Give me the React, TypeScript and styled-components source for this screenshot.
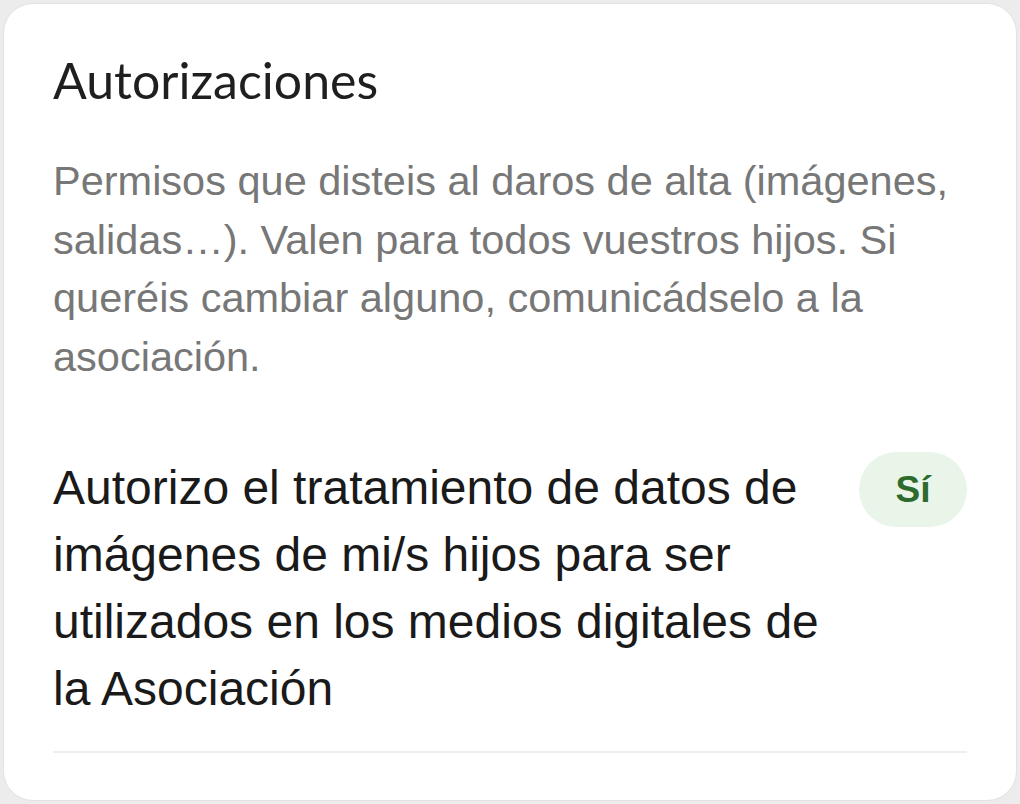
import styled, { createGlobalStyle } from "styled-components"

const GlobalStyle = createGlobalStyle`
  html, body {
    margin: 0;
    padding: 0;
    background: #ececec;
  }
  * {
    box-sizing: border-box;
  }
`

const Page = styled.div`
  padding: 3px;
  width: 1020px;
  height: 804px;
`

const Card = styled.section`
  height: 798px;
  background: #ffffff;
  border: 1px solid #e2e2e2;
  border-radius: 30px;
  padding: 44px 49px 0;
  display: flex;
  flex-direction: column;
`

const Title = styled.h2`
  margin: 0;
  font-family: Lato, "Liberation Sans", sans-serif;
  font-weight: 400;
  font-size: 50px;
  line-height: 65px;
  color: #1f1f1f;
`

const Description = styled.p`
  margin: 39px 0 0;
  font-family: "Liberation Sans", Arial, sans-serif;
  font-size: 41.5px;
  line-height: 58.5px;
  color: #777777;
`

const List = styled.div`
  margin-top: 68px;
  display: flex;
  flex-direction: column;
`

const Row = styled.div`
  display: flex;
  align-items: flex-start;
  gap: 32px;
  padding-bottom: 29px;
  border-bottom: 2px solid #efefef;
`

const Label = styled.div`
  flex: 1;
  font-family: "Liberation Sans", Arial, sans-serif;
  font-size: 48px;
  line-height: 67px;
  color: #1a1a1a;
`

const Badge = styled.span<{ $yes: boolean }>`
  flex: none;
  width: 108px;
  height: 75px;
  margin-top: -2px;
  border-radius: 38px;
  display: flex;
  align-items: center;
  justify-content: center;
  font-family: "Liberation Sans", Arial, sans-serif;
  font-weight: 700;
  font-size: 37px;
  background: ${(p) => (p.$yes ? "#eaf5ea" : "#fbeaea")};
  color: ${(p) => (p.$yes ? "#2d6a2d" : "#a33")};
`

const items = [
  {
    label:
      "Autorizo el tratamiento de datos de imágenes de mi/s hijos para ser utilizados en los medios digitales de la Asociación",
    value: true,
  },
]

export default function App() {
  return (
    <>
      <GlobalStyle />
      <Page>
        <Card>
          <Title>Autorizaciones</Title>
          <Description>
            Permisos que disteis al daros de alta (imágenes, salidas…). Valen para todos vuestros
            hijos. Si queréis cambiar alguno, comunicádselo a la asociación.
          </Description>
          <List>
            {items.map((item) => (
              <Row key={item.label}>
                <Label>{item.label}</Label>
                <Badge $yes={item.value}>{item.value ? "Sí" : "No"}</Badge>
              </Row>
            ))}
          </List>
        </Card>
      </Page>
    </>
  )
}
